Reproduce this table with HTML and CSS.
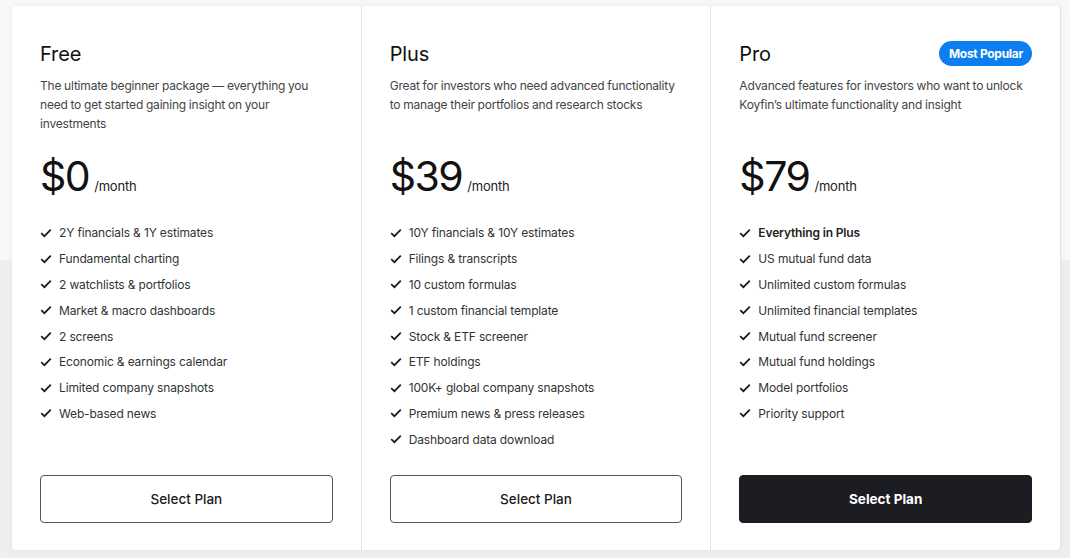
FILE: index.html
```html
<!DOCTYPE html>
<html>
<head>
<meta charset="utf-8">
<link rel="stylesheet" href="styles.css">
</head>
<body>
<div class="bg-top"></div>
<div class="plans">
  <div class="plan">
    <div class="plan-head"><h2 class="plan-name">Free</h2></div>
    <p class="plan-desc">The ultimate beginner package — everything you need to get started gaining insight on your investments</p>
    <div class="price"><span class="amount">$0</span><span class="per">/month</span></div>
    <ul class="features">
      <li><svg class="check" viewBox="0 0 12 10"><path d="M1.2 5.2 L4.4 8.2 L10.8 1.6"/></svg>2Y financials &amp; 1Y estimates</li>
      <li><svg class="check" viewBox="0 0 12 10"><path d="M1.2 5.2 L4.4 8.2 L10.8 1.6"/></svg>Fundamental charting</li>
      <li><svg class="check" viewBox="0 0 12 10"><path d="M1.2 5.2 L4.4 8.2 L10.8 1.6"/></svg>2 watchlists &amp; portfolios</li>
      <li><svg class="check" viewBox="0 0 12 10"><path d="M1.2 5.2 L4.4 8.2 L10.8 1.6"/></svg>Market &amp; macro dashboards</li>
      <li><svg class="check" viewBox="0 0 12 10"><path d="M1.2 5.2 L4.4 8.2 L10.8 1.6"/></svg>2 screens</li>
      <li><svg class="check" viewBox="0 0 12 10"><path d="M1.2 5.2 L4.4 8.2 L10.8 1.6"/></svg>Economic &amp; earnings calendar</li>
      <li><svg class="check" viewBox="0 0 12 10"><path d="M1.2 5.2 L4.4 8.2 L10.8 1.6"/></svg>Limited company snapshots</li>
      <li><svg class="check" viewBox="0 0 12 10"><path d="M1.2 5.2 L4.4 8.2 L10.8 1.6"/></svg>Web-based news</li>
    </ul>
    <button class="btn">Select Plan</button>
  </div>
  <div class="plan">
    <div class="plan-head"><h2 class="plan-name">Plus</h2></div>
    <p class="plan-desc">Great for investors who need advanced functionality to manage their portfolios and research stocks</p>
    <div class="price"><span class="amount">$39</span><span class="per">/month</span></div>
    <ul class="features">
      <li><svg class="check" viewBox="0 0 12 10"><path d="M1.2 5.2 L4.4 8.2 L10.8 1.6"/></svg>10Y financials &amp; 10Y estimates</li>
      <li><svg class="check" viewBox="0 0 12 10"><path d="M1.2 5.2 L4.4 8.2 L10.8 1.6"/></svg>Filings &amp; transcripts</li>
      <li><svg class="check" viewBox="0 0 12 10"><path d="M1.2 5.2 L4.4 8.2 L10.8 1.6"/></svg>10 custom formulas</li>
      <li><svg class="check" viewBox="0 0 12 10"><path d="M1.2 5.2 L4.4 8.2 L10.8 1.6"/></svg>1 custom financial template</li>
      <li><svg class="check" viewBox="0 0 12 10"><path d="M1.2 5.2 L4.4 8.2 L10.8 1.6"/></svg>Stock &amp; ETF screener</li>
      <li><svg class="check" viewBox="0 0 12 10"><path d="M1.2 5.2 L4.4 8.2 L10.8 1.6"/></svg>ETF holdings</li>
      <li><svg class="check" viewBox="0 0 12 10"><path d="M1.2 5.2 L4.4 8.2 L10.8 1.6"/></svg>100K+ global company snapshots</li>
      <li><svg class="check" viewBox="0 0 12 10"><path d="M1.2 5.2 L4.4 8.2 L10.8 1.6"/></svg>Premium news &amp; press releases</li>
      <li><svg class="check" viewBox="0 0 12 10"><path d="M1.2 5.2 L4.4 8.2 L10.8 1.6"/></svg>Dashboard data download</li>
    </ul>
    <button class="btn">Select Plan</button>
  </div>
  <div class="plan">
    <div class="plan-head"><h2 class="plan-name">Pro</h2><span class="badge">Most Popular</span></div>
    <p class="plan-desc">Advanced features for investors who want to unlock Koyfin’s ultimate functionality and insight</p>
    <div class="price"><span class="amount">$79</span><span class="per">/month</span></div>
    <ul class="features">
      <li class="strong"><svg class="check" viewBox="0 0 12 10"><path d="M1.2 5.2 L4.4 8.2 L10.8 1.6"/></svg>Everything in Plus</li>
      <li><svg class="check" viewBox="0 0 12 10"><path d="M1.2 5.2 L4.4 8.2 L10.8 1.6"/></svg>US mutual fund data</li>
      <li><svg class="check" viewBox="0 0 12 10"><path d="M1.2 5.2 L4.4 8.2 L10.8 1.6"/></svg>Unlimited custom formulas</li>
      <li><svg class="check" viewBox="0 0 12 10"><path d="M1.2 5.2 L4.4 8.2 L10.8 1.6"/></svg>Unlimited financial templates</li>
      <li><svg class="check" viewBox="0 0 12 10"><path d="M1.2 5.2 L4.4 8.2 L10.8 1.6"/></svg>Mutual fund screener</li>
      <li><svg class="check" viewBox="0 0 12 10"><path d="M1.2 5.2 L4.4 8.2 L10.8 1.6"/></svg>Mutual fund holdings</li>
      <li><svg class="check" viewBox="0 0 12 10"><path d="M1.2 5.2 L4.4 8.2 L10.8 1.6"/></svg>Model portfolios</li>
      <li><svg class="check" viewBox="0 0 12 10"><path d="M1.2 5.2 L4.4 8.2 L10.8 1.6"/></svg>Priority support</li>
    </ul>
    <button class="btn btn-dark">Select Plan</button>
  </div>
</div>
</body>
</html>
```

FILE: styles.css
```css
* { box-sizing: border-box; }
html, body { margin: 0; padding: 0; }
body {
  width: 1070px;
  height: 558px;
  overflow: hidden;
  background: #efefef;
  font-family: Inter, "Noto Sans", sans-serif;
  color: #222;
  position: relative;
  padding: 6px 9px 8px 12px;
}
.bg-top {
  position: absolute;
  left: 0; top: 0; right: 0;
  height: 260px;
  background: #f8f8f8;
}
.plans {
  position: relative;
  display: flex;
  height: 544px;
  background: #fff;
  border-radius: 4px;
  box-shadow: 0 0 6px rgba(0,0,0,0.06);
  border-right: 1px solid #e2e2e2;
}
.plan {
  flex: 1 1 0;
  display: flex;
  flex-direction: column;
  padding: 35px 28px 27px 28px;
}
.plan + .plan { border-left: 1px solid #e4e4e4; }
.plan-head {
  display: flex;
  align-items: center;
  justify-content: space-between;
  height: 25px;
}
.plan-name {
  margin: 0;
  font-size: 20px;
  font-weight: 400;
  color: #111;
  letter-spacing: -0.1px;
}
.badge {
  background: #0c7ef0;
  color: #fff;
  font-size: 12px;
  font-weight: 700;
  height: 25px;
  line-height: 25px;
  padding: 0 9px 0 10px;
  border-radius: 13px;
  letter-spacing: -0.3px;
}
.plan-desc {
  margin: 10px 0 0 0;
  font-size: 12px;
  line-height: 19px;
  color: #444;
  height: 57px;
  letter-spacing: -0.2px;
  word-spacing: -0.3px;
}
.price {
  margin-top: 20px;
  display: flex;
  align-items: baseline;
  height: 46px;
}
.amount {
  font-size: 41px;
  line-height: 46px;
  color: #111;
  letter-spacing: -1.5px;
}
.per {
  font-size: 13px;
  margin-left: 5px;
  color: #222;
  letter-spacing: -0.2px;
}
.features {
  list-style: none;
  margin: 21px 0 0 0;
  padding: 0;
}
.features li {
  display: flex;
  align-items: center;
  height: 25.8px;
  font-size: 12px;
  color: #333;
  letter-spacing: -0.15px;
}
.features li.strong { font-weight: 600; color: #222; }
.check {
  width: 12px;
  height: 10px;
  margin-right: 7px;
  fill: none;
  stroke: #1a1a1a;
  stroke-width: 1.7;
}
.btn {
  margin-top: auto;
  height: 48px;
  width: 100%;
  background: #fff;
  border: 1px solid #555;
  border-radius: 4px;
  font-family: Inter, "Noto Sans", sans-serif;
  font-size: 13.5px;
  font-weight: 500;
  color: #1a1a1a;
}
.btn-dark {
  background: #1b1d22;
  border-color: #1b1d22;
  color: #fff;
  font-weight: 700;
}
```
